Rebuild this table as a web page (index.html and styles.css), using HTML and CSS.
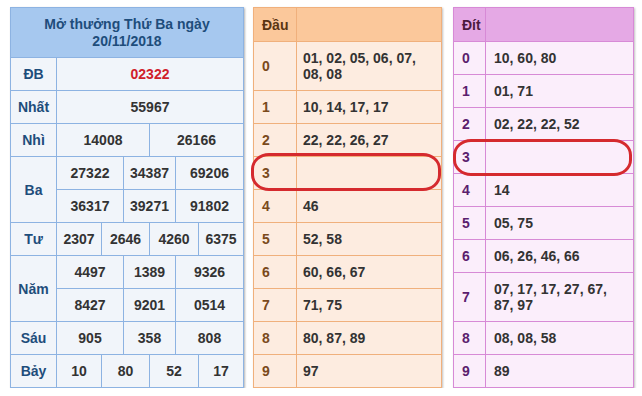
FILE: index.html
```html
<!DOCTYPE html>
<html lang="vi">
<head>
<meta charset="utf-8">
<title>Kết quả xổ số</title>
<link rel="stylesheet" href="styles.css">
</head>
<body>
<div class="page">
  <div class="kq">
    <div class="kq-head">Mở thưởng Thứ Ba ngày 20/11/2018</div>
    <div class="lbl">ĐB</div><div class="num c6 red">02322</div>
    <div class="lbl">Nhất</div><div class="num c6">55967</div>
    <div class="lbl">Nhì</div><div class="num c3">14008</div><div class="num c3">26166</div>
    <div class="lbl r2">Ba</div><div class="num c2">27322</div><div class="num c2">34387</div><div class="num c2">69206</div>
    <div class="num c2">36317</div><div class="num c2">39271</div><div class="num c2">91802</div>
    <div class="lbl">Tư</div><div class="num">2307</div><div class="num c2">2646</div><div class="num c2">4260</div><div class="num">6375</div>
    <div class="lbl r2">Năm</div><div class="num c2">4497</div><div class="num c2">1389</div><div class="num c2">9326</div>
    <div class="num c2">8427</div><div class="num c2">9201</div><div class="num c2">0514</div>
    <div class="lbl">Sáu</div><div class="num c2">905</div><div class="num c2">358</div><div class="num c2">808</div>
    <div class="lbl">Bảy</div><div class="num">10</div><div class="num c2">80</div><div class="num c2">52</div><div class="num">17</div>
  </div>

  <div class="lt dau">
    <div class="h">Đầu</div><div class="h"></div>
    <div class="k">0</div><div class="v">01, 02, 05, 06, 07, 08, 08</div>
    <div class="k">1</div><div class="v">10, 14, 17, 17</div>
    <div class="k">2</div><div class="v">22, 22, 26, 27</div>
    <div class="k">3</div><div class="v"></div>
    <div class="k">4</div><div class="v">46</div>
    <div class="k">5</div><div class="v">52, 58</div>
    <div class="k">6</div><div class="v">60, 66, 67</div>
    <div class="k">7</div><div class="v">71, 75</div>
    <div class="k">8</div><div class="v">80, 87, 89</div>
    <div class="k">9</div><div class="v">97</div>
    <div class="oval oval-dau"></div>
  </div>

  <div class="lt dit">
    <div class="h">Đít</div><div class="h"></div>
    <div class="k">0</div><div class="v">10, 60, 80</div>
    <div class="k">1</div><div class="v">01, 71</div>
    <div class="k">2</div><div class="v">02, 22, 22, 52</div>
    <div class="k">3</div><div class="v"></div>
    <div class="k">4</div><div class="v">14</div>
    <div class="k">5</div><div class="v">05, 75</div>
    <div class="k">6</div><div class="v">06, 26, 46, 66</div>
    <div class="k">7</div><div class="v">07, 17, 17, 27, 67, 87, 97</div>
    <div class="k">8</div><div class="v">08, 08, 58</div>
    <div class="k">9</div><div class="v">89</div>
    <div class="oval oval-dit"></div>
  </div>
</div>
</body>
</html>
```
FILE: styles.css
```css
html, body {
  margin: 0;
  padding: 0;
  background: #ffffff;
}
body {
  font-family: "Liberation Sans", Arial, sans-serif;
  font-size: 14px;
  font-weight: bold;
  line-height: 16px;
  color: #333333;
}
.page {
  display: flex;
  align-items: flex-start;
  padding: 7px 0 0 10px;
}

/* Left result table */
.kq {
  display: grid;
  grid-template-columns: 45px 44px 21px 25px 25px 22px 44px;
  gap: 1px;
  padding: 1px;
  background: #8db3e2;
  box-shadow: 1px 1px 2px rgba(0, 0, 0, 0.3);
}
.kq > div {
  background: #f1f5fa;
  display: flex;
  align-items: center;
  justify-content: center;
  text-align: center;
  min-height: 32px;
}
.kq-head {
  grid-column: 1 / -1;
  background: #a6c8ef !important;
  color: #1e4d7b;
  padding: 0 16px;
  min-height: 49px !important;
  font-size: 14px;
  line-height: 17px;
}
.lbl {
  color: #1e4d7b;
}
.r2 { grid-row: span 2; }
.c2 { grid-column: span 2; }
.c3 { grid-column: span 3; }
.c6 { grid-column: span 6; }
.red { color: #d0202a; }

/* Lô tô tables */
.lt {
  position: relative;
  display: grid;
  gap: 1px;
  padding: 1px;
  box-shadow: 1px 1px 2px rgba(0, 0, 0, 0.25);
}
.lt > div {
  display: flex;
  align-items: center;
  min-height: 32px;
  padding: 8px 8px;
  box-sizing: border-box;
}
.lt > .h {
  min-height: 33px;
}
.dau {
  margin-left: 9px;
  grid-template-columns: 42px 144px;
  background: #f0b07c;
}
.dau > div { background: #fdece0; }
.dau > .h { background: #fbc89b; color: #5a3512; }
.dau > .k { color: #7a4a1c; }
.dau > .v { padding-left: 6px; }

.dit {
  margin-left: 11px;
  grid-template-columns: 31px 147px;
  background: #d78ad6;
}
.dit > div { background: #fbeefb; }
.dit > .h { background: #e5a9e5; color: #4a1b3f; }
.dit > .k { color: #5b1e6e; }

.lt > .oval {
  position: absolute;
  border: 3px solid #d52a2e;
  border-radius: 18px / 16px;
  padding: 0;
  min-height: 0;
  background: transparent;
  box-sizing: border-box;
}
.oval-dau {
  left: -2px;
  top: 146px;
  width: 190px;
  height: 38px;
}
.oval-dit {
  left: 0;
  top: 132px;
  width: 179px;
  height: 37px;
}
```
